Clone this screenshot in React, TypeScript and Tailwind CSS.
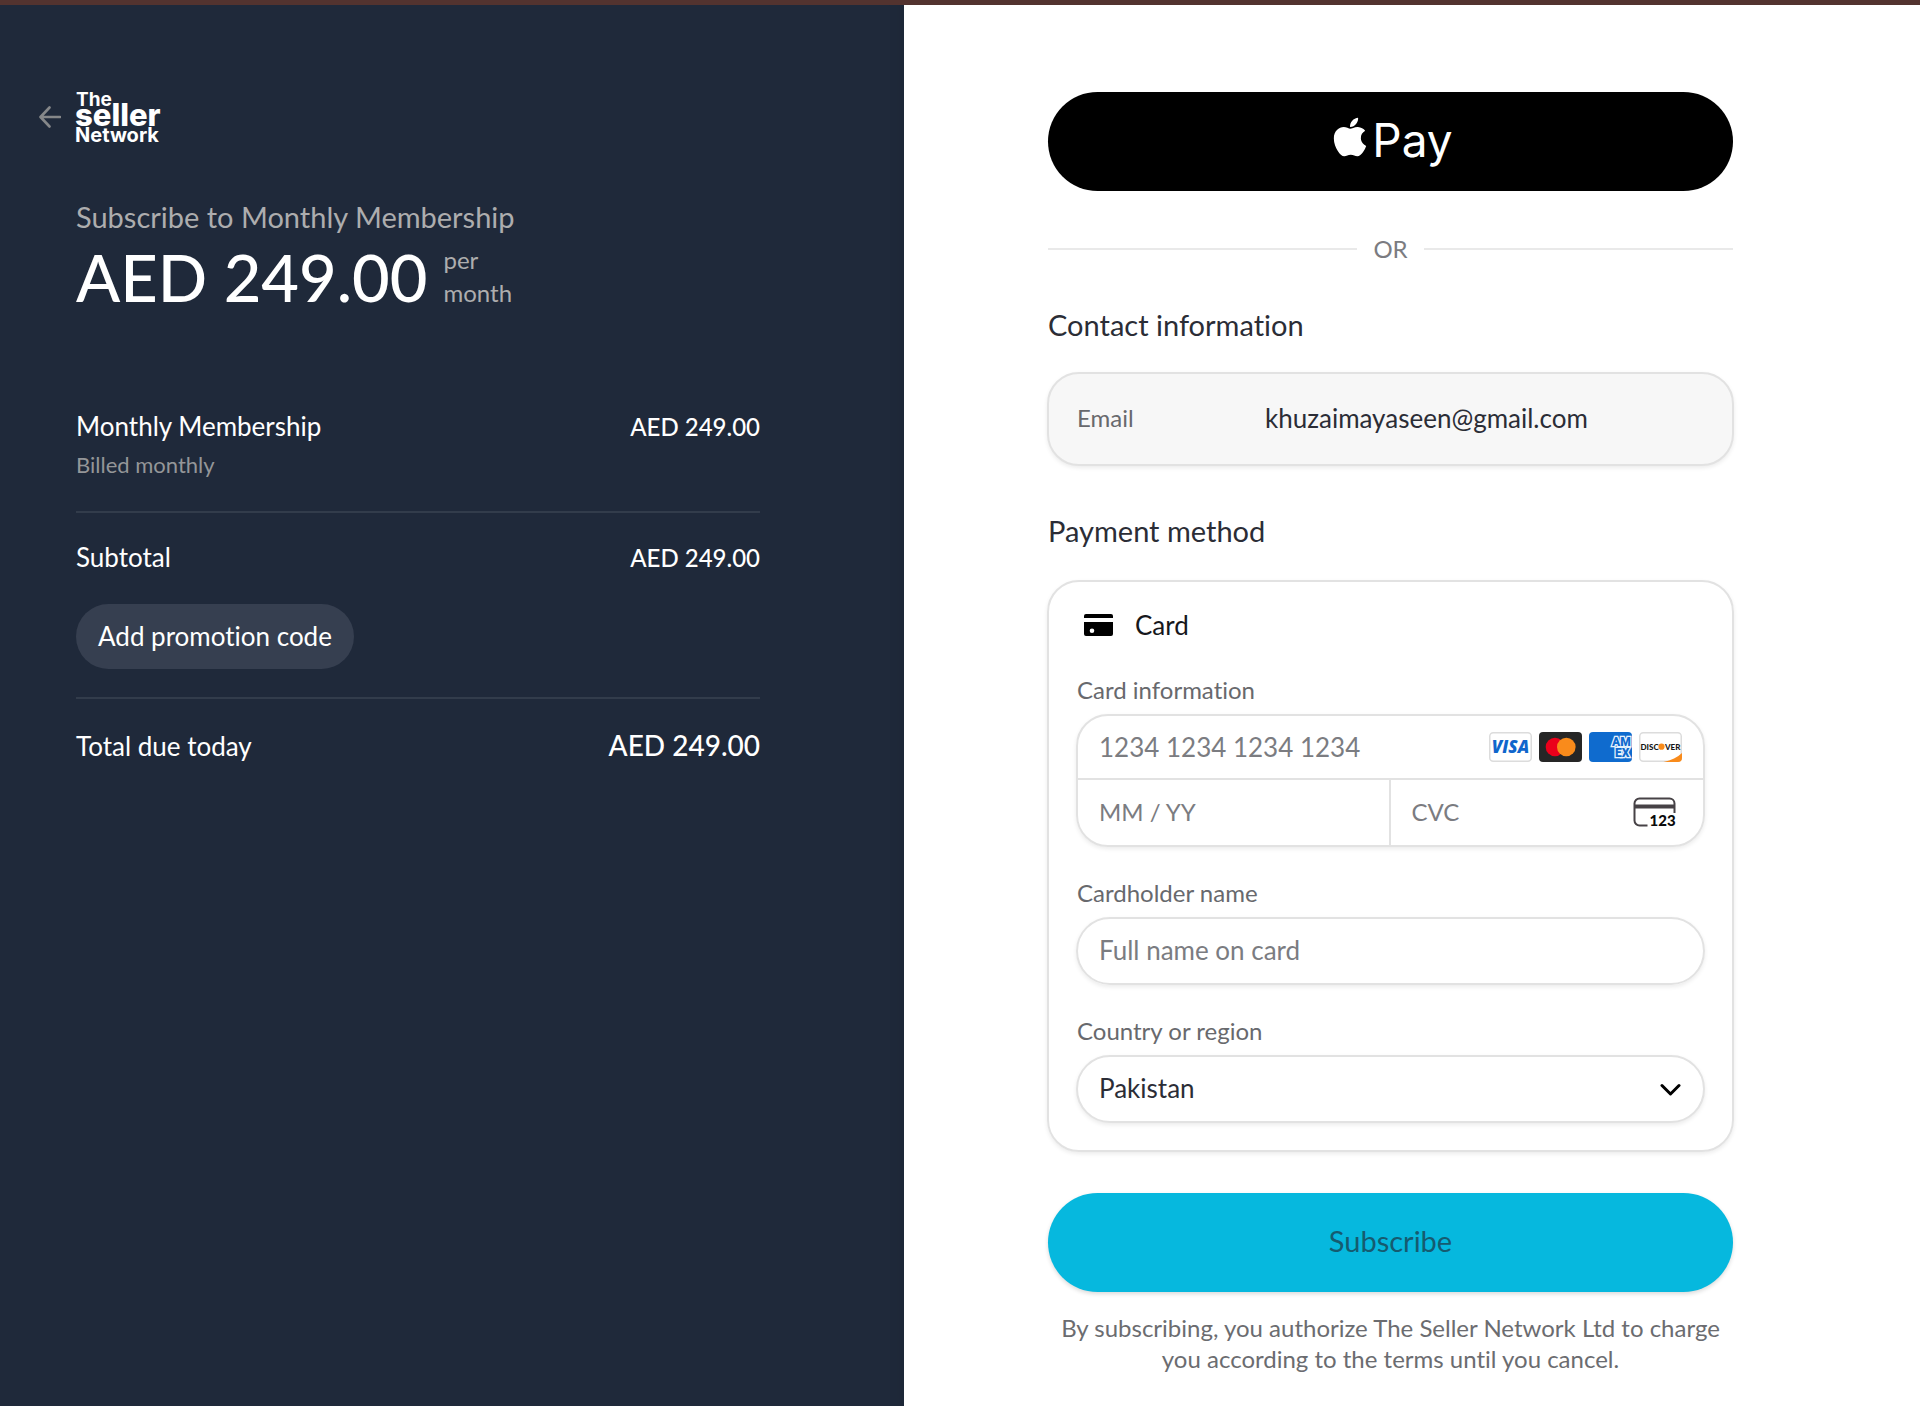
import type { ReactNode } from "react";
import { FaApple } from "react-icons/fa";

function SellerLogo() {
  return (
    <svg width="84" height="50" viewBox="0 0 84 50" role="img" aria-label="The Seller Network" className="shrink-0 overflow-visible fill-white font-['Inter',sans-serif]">
      <text x="0" y="14" fontSize="19" fontWeight="700">The</text>
      <text x="-1" y="34" fontSize="31" fontWeight="800">seller</text>
      <text x="-1" y="50" fontSize="20" fontWeight="700">Network</text>
    </svg>
  );
}

function BackArrow() {
  return (
    <svg width="22" height="22" viewBox="0 0 22 22" fill="none" stroke="#858789" strokeWidth="2.6" strokeLinecap="round" strokeLinejoin="round" aria-hidden="true">
      <path d="M21 11H2M10.5 1.5 1.5 11l9 9.5" />
    </svg>
  );
}

function Visa() {
  return (
    <svg width="43" height="30" viewBox="0 0 43 30" role="img" aria-label="Visa">
      <rect x="0.75" y="0.75" width="41.5" height="28.5" rx="3.5" fill="#fff" stroke="#dcdcdc" strokeWidth="1.5" />
      <text x="21.5" y="21" textAnchor="middle" fontFamily="Open Sans, sans-serif" fontSize="17" fontWeight="800" fontStyle="italic" fill="#0f66cc">VISA</text>
    </svg>
  );
}

function Mastercard() {
  return (
    <svg width="43" height="30" viewBox="0 0 43 30" role="img" aria-label="Mastercard">
      <rect width="43" height="30" rx="4" fill="#262626" />
      <circle cx="16" cy="15" r="9.3" fill="#eb001b" />
      <circle cx="27.3" cy="15" r="9.3" fill="#f98b1b" />
    </svg>
  );
}

function Amex() {
  return (
    <svg width="43" height="30" viewBox="0 0 43 30" role="img" aria-label="American Express">
      <rect width="43" height="30" rx="4" fill="#0f6bce" />
      <g fontFamily="Roboto, sans-serif" fontSize="12" fontWeight="900" fill="#0f6bce" stroke="#e4f1fc" strokeWidth="2.6" paintOrder="stroke">
        <text x="23" y="14">AM</text>
        <text x="26" y="25">EX</text>
      </g>
    </svg>
  );
}

function Discover() {
  return (
    <svg width="43" height="30" viewBox="0 0 43 30" role="img" aria-label="Discover">
      <rect x="0.75" y="0.75" width="41.5" height="28.5" rx="3.5" fill="#fff" stroke="#dcdcdc" strokeWidth="1.5" />
      <path d="M43 21v5a4 4 0 0 1-4 4H24.5c8-1.6 14-4.5 18.5-9z" fill="#f98b1b" />
      <g fontFamily="Lato, sans-serif" fontSize="8" fontWeight="900" fill="#161616">
        <text x="1.5" y="17.5">DISC</text>
        <text x="26" y="17.5">VER</text>
      </g>
      <circle cx="22.5" cy="14.7" r="3.1" fill="#f98b1b" />
    </svg>
  );
}

function CvcIcon() {
  return (
    <svg width="43" height="31" viewBox="0 0 43 31" aria-hidden="true">
      <path d="M14.5 28.5h-8a5 5 0 0 1-5-5v-17a5 5 0 0 1 5-5h30a5 5 0 0 1 5 5V16" fill="none" stroke="#474246" strokeWidth="2" />
      <rect x="1" y="7.5" width="41" height="4" fill="#474246" />
      <text x="16.5" y="29" fontFamily="Lato, sans-serif" fontSize="15" fontWeight="900" fill="#0a0a0a">123</text>
    </svg>
  );
}

function CardGlyph() {
  return (
    <svg width="29" height="22" viewBox="0 0 29 22" aria-hidden="true">
      <path d="M2 0h25a2 2 0 0 1 2 2v2H0V2a2 2 0 0 1 2-2z" />
      <path fillRule="evenodd" d="M0 8h29v12a2 2 0 0 1-2 2H2a2 2 0 0 1-2-2zM8 14.5a2.3 2.3 0 1 0 0 4.600 2.300 2.300 0 0 0 0-4.600z" />
    </svg>
  );
}

function Row({ label, amount, large }: { label: string; amount: string; large?: boolean }) {
  return (
    <div className="flex items-baseline justify-between leading-8">
      <span className="text-[26px]">{label}</span>
      <span className={large ? "text-[28px] leading-9 font-medium" : "text-[24px] font-medium"}>{amount}</span>
    </div>
  );
}

function FieldLabel({ htmlFor, children }: { htmlFor: string; children: ReactNode }) {
  return (
    <label htmlFor={htmlFor} className="block px-px text-[24px] leading-7 text-[#68696d]">
      {children}
    </label>
  );
}

export default function App() {
  return (
    <div className="flex min-h-screen flex-col bg-white font-['Lato','Noto_Sans',sans-serif] [font-variant-ligatures:none]">
      <div className="h-[5px] bg-[#53332f]" />
      <div className="grid flex-1 grid-cols-[904fr_1016fr]">
        <aside className="bg-[#1f293a] pr-36 pl-[76px] text-white shadow-[inset_-16px_0_16px_-16px_rgba(0,0,0,0.1)]">
          <div className="ml-auto max-w-[684px] pt-[87px]">
            <a href="#" aria-label="Back" className="-ml-[37px] flex items-center gap-[15px]">
              <BackArrow />
              <SellerLogo />
            </a>
            <h1 className="mt-[57px] text-[29px] leading-9 text-[#adadae]">Subscribe to Monthly Membership</h1>
            <div className="mt-2 flex items-center gap-4">
              <span className="text-[65px] leading-[66px] font-medium">AED 249.00</span>
              <span className="pb-0.5 text-[24px] leading-[33px] text-[#adadae]">
                per
                <br />
                month
              </span>
            </div>
            <section className="mt-[99px]">
              <Row label="Monthly Membership" amount="AED 249.00" />
              <p className="mt-2 text-[22px] leading-7 text-[#949698]">Billed monthly</p>
              <hr className="mt-8 border-t-2 border-[#323c4b]" />
              <div className="mt-7">
                <Row label="Subtotal" amount="AED 249.00" />
              </div>
              <button type="button" className="mt-[30px] h-[65px] rounded-full bg-[#363f50] px-[22px] pb-0.5 text-[26px] leading-8">
                Add promotion code
              </button>
              <hr className="mt-7 border-t-2 border-[#323c4b]" />
              <div className="mt-7">
                <Row label="Total due today" amount="AED 249.00" large />
              </div>
            </section>
          </div>
        </aside>

        <main className="pr-[186px] pl-[143px] text-[#2b2d36]">
          <form className="max-w-[687px] pt-[87px]" onSubmit={(e) => e.preventDefault()}>
            <div className="px-px">
              <button type="button" aria-label="Apple Pay" className="flex h-[99px] w-full items-center justify-center rounded-full bg-black pb-1 text-white">
                <FaApple className="mb-1.5 size-11" />
                <span className="font-['Inter',sans-serif] text-[46px] leading-[60px]">Pay</span>
              </button>
              <div className="mt-10 flex items-center gap-4 text-[24px] leading-9 text-[#7b7c81]">
                <span className="h-0.5 flex-1 bg-[#e9e9e9]" />
                OR
                <span className="h-0.5 flex-1 bg-[#e9e9e9]" />
              </div>
            </div>

            <h2 className="mt-10 px-px text-[29px] leading-9">Contact information</h2>
            <div className="mt-[29px] flex items-center rounded-[32px] border-2 border-[#e2e2e2] bg-[#f7f7f7] px-7 pt-[26px] pb-7 shadow-[0_2px_4px_rgba(0,0,0,0.08)]">
              <span className="w-[188px] text-[24px] leading-9 text-[#68696d]">Email</span>
              <span className="text-[26px] leading-9">khuzaimayaseen@gmail.com</span>
            </div>

            <h2 className="mt-[47px] px-px text-[29px] leading-9">Payment method</h2>
            <div className="mt-[31px] rounded-[32px] border-2 border-[#e2e2e2] px-[27px] pt-[25px] pb-[27px] shadow-[0_2px_4px_rgba(0,0,0,0.08)]">
              <div className="flex items-center gap-[22px] pl-2 text-[26px] leading-9 text-[#16171c]">
                <CardGlyph />
                Card
              </div>

              <div className="mt-[33px]">
                <FieldLabel htmlFor="card">Card information</FieldLabel>
              </div>
              <div className="mt-2.5 rounded-[32px] border-2 border-[#e2e2e2] text-[26px] shadow-[0_2px_4px_rgba(0,0,0,0.08)]">
                <div className="flex items-center gap-[7px] border-b-2 border-[#e2e2e2] pr-[21px] pl-[21px]">
                  <input id="card" placeholder="1234 1234 1234 1234" className="h-[62px] min-w-0 flex-1 outline-none placeholder:text-[#7b7c81]" />
                  <Visa />
                  <Mastercard />
                  <Amex />
                  <Discover />
                </div>
                <div className="grid grid-cols-2 text-[24px]">
                  <input aria-label="Expiration" placeholder="MM / YY" className="h-[65px] min-w-0 border-r-2 border-[#e2e2e2] pb-0.5 pl-[21px] outline-none placeholder:text-[#7b7c81]" />
                  <div className="flex items-center pr-[27px] pl-[21px]">
                    <input aria-label="CVC" placeholder="CVC" className="h-[65px] min-w-0 flex-1 pb-0.5 outline-none placeholder:text-[#7b7c81]" />
                    <CvcIcon />
                  </div>
                </div>
              </div>

              <div className="mt-8">
                <FieldLabel htmlFor="name">Cardholder name</FieldLabel>
              </div>
              <input id="name" placeholder="Full name on card" className="mt-2.5 h-[68px] w-full rounded-full border-2 border-[#e2e2e2] px-[21px] pb-0.5 text-[26px] shadow-[0_2px_4px_rgba(0,0,0,0.08)] outline-none placeholder:text-[#7b7c81]" />

              <div className="mt-8">
                <FieldLabel htmlFor="country">Country or region</FieldLabel>
              </div>
              <div className="relative mt-2.5">
                <select id="country" className="h-[68px] w-full appearance-none rounded-full border-2 border-[#e2e2e2] bg-white px-[21px] pb-0.5 text-[26px] shadow-[0_2px_4px_rgba(0,0,0,0.08)] outline-none">
                  <option>Pakistan</option>
                </select>
                <svg className="pointer-events-none absolute top-7 right-6" width="21" height="14" viewBox="0 0 21 14" fill="none" stroke="#000" strokeWidth="3" strokeLinecap="round" strokeLinejoin="round" aria-hidden="true">
                  <path d="M2 2.5 10.5 11 19 2.5" />
                </svg>
              </div>
            </div>

            <div className="mt-[41px] px-px">
              <button type="submit" className="h-[99px] w-full rounded-full bg-[#06b8de] pb-1 text-[29px] text-[#155b70] shadow-[0_2px_4px_rgba(0,0,0,0.15)]">
                Subscribe
              </button>
              <p className="mt-5 text-center text-[24px] leading-[31px] text-[#6b6c70]">
                By subscribing, you authorize The Seller Network Ltd to charge you according to the terms until you cancel.
              </p>
            </div>
          </form>
        </main>
      </div>
    </div>
  );
}
